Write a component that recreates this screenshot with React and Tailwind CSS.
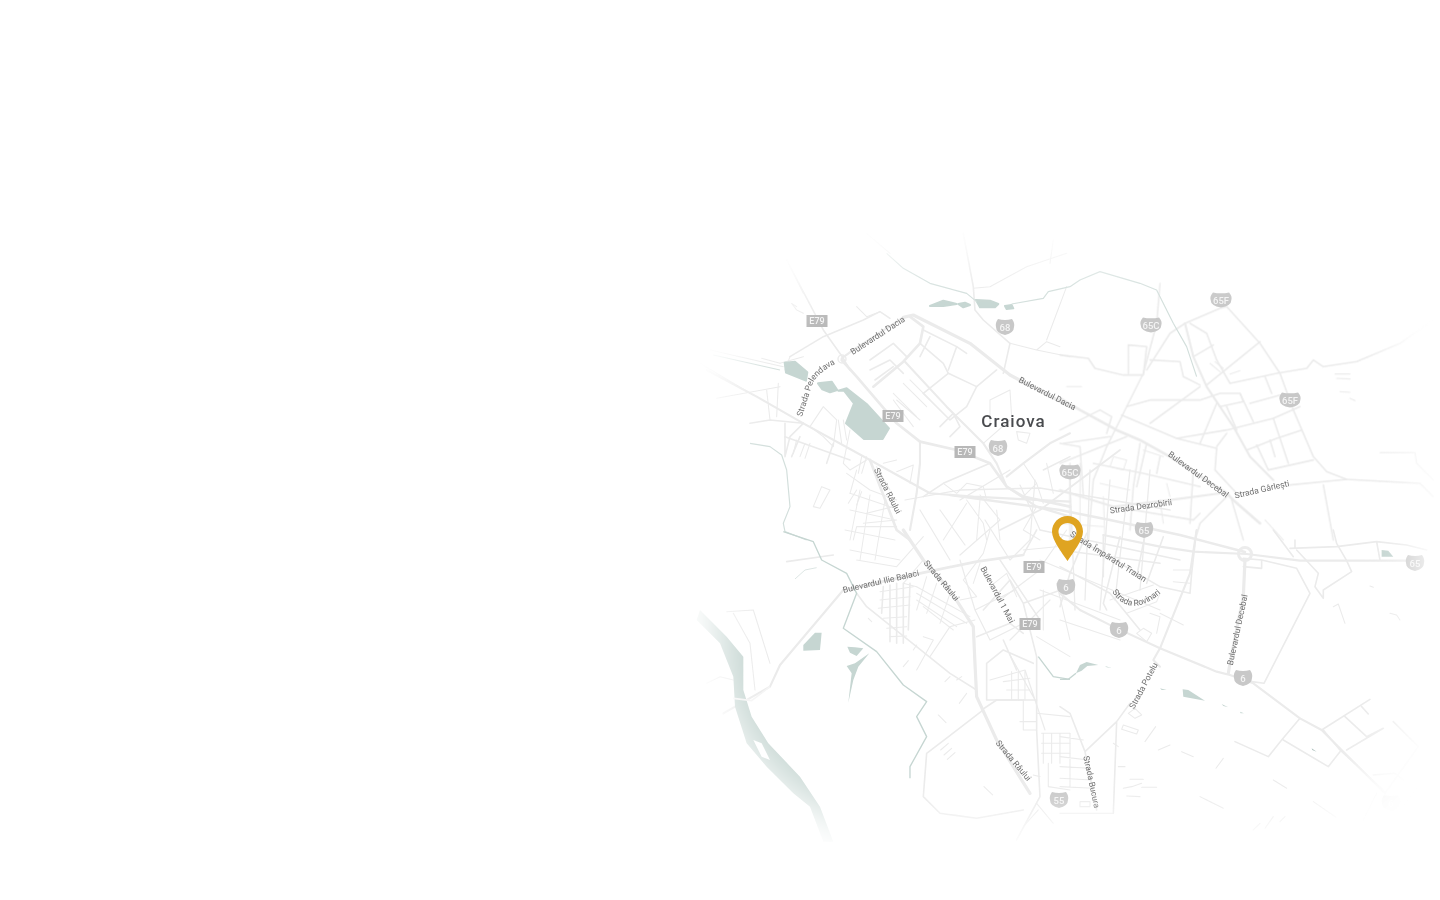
const roadsNW = [
  ["M640,262 L670,255 L840,340 L960,435 L1140,530", 6],
  ["M455,385 L490,360 L640,262", 4],
  ["M660,260 L700,290 L690,340 L640,395 L550,470", 5],
  ["M300,380 L400,320 L520,270 L570,245 L600,265", 3],
  ["M290,90 L400,300 L460,385 L480,420", 3],
  ["M455,390 L500,440 L620,580 L690,635 L800,660 L900,700 L950,770 L1000,800 L1140,830", 5],
  ["M50,420 L200,500 L340,580 L540,690 L720,790 L850,800 L1140,815", 4],
  ["M645,395 L770,530 L880,640 L920,700 L950,770 L1040,830 L1140,860", 4],
  ["M690,340 L760,400 L775,430 L700,490", 3],
  ["M775,430 L860,470 L920,420", 3],
  ["M700,300 L800,350 L775,420", 3],
  ["M720,320 L690,380 M800,350 L830,370", 3],
  ["M690,635 L690,700 L680,790 L660,900", 4],
  ["M540,690 L620,900 L660,930", 5],
  ["M340,580 L300,620 L285,680 M285,580 L285,680", 3],
  ["M180,580 L240,570 L340,580", 3],
  ["M285,620 L480,690 M330,620 L305,680 M430,640 L410,700", 3],
  ["M230,480 L240,570 M265,460 L260,560", 2],
  ["M300,380 L285,420", 2],
  ["M820,10 L850,170 L855,240 L880,270 L960,340 L940,430", 3],
  ["M850,175 L900,170 L1010,110 L1130,70", 2],
  ["M530,10 L600,70", 2],
  ["M960,340 L1040,360 L1140,380 M1040,360 L1070,335 L1110,350", 2],
  ["M1080,100 L1090,30 M1130,170 L1070,330", 2],
  ["M290,90 L340,190", 2],
  ["M500,230 L530,260 L570,245", 2],
  ["M540,390 L610,340 L650,380 M540,420 L600,390 L640,430 M555,450 L610,410", 3],
  ["M700,490 L780,570 L830,530 L860,470 M750,590 L790,550 L810,590 L780,620", 3],
  ["M880,640 L960,570 M900,510 L960,480 L965,560 M900,510 L900,590", 2],
  ["M980,605 L1020,610 L1010,640 L985,630 Z", 2],
  ["M1140,610 L1080,640 L1000,700 L950,740", 4],
  ["M1060,720 L1140,680", 3],
  ["M1070,700 L1090,790 M1040,760 L1060,820", 2],
  ["M1000,700 L1040,760 L1000,800", 2],
  ["M900,700 L760,760 L700,800", 3],
  ["M760,760 L800,790 L830,760 L880,770 L890,810", 2],
  ["M830,810 L880,880 L890,930 M870,810 L860,930 M760,930 L830,820", 2],
  ["M920,840 L930,930 M1040,830 L1000,900 L1050,930", 2],
  ["M620,725 L670,705 L660,760 M480,600 L460,700 L480,720 L530,690", 2],
  ["M370,830 L395,770 L420,780 L390,835 Z", 2],
  ["M480,790 L600,830 M475,820 L500,780 M500,825 L515,785", 2],
  ["M530,850 L610,830 M520,880 L620,870 M490,930 L500,890 L620,890", 2],
  ["M600,780 L560,710 M580,700 L620,690", 2],
  ["M470,730 L540,780 L620,810", 2],
  ["M500,720 L480,790 M515,680 L505,730 M530,680 L515,730", 2],
  ["M440,570 L430,650 L400,620 L360,590 L400,530 L440,570", 2],
  ["M320,630 L310,670 M345,640 L330,680 M360,640 L345,685", 2],
  ["M460,570 L470,630 M445,570 L455,640", 2],
  ["M320,230 L305,220 L320,240 L340,250", 2],
  ["M215,385 L270,400 L340,380", 2],
  ["M60,360 L280,410 M80,505 L270,470", 2],
  ["M30,400 L180,490", 2],
  ["M610,490 L680,560 M620,510 L690,570 M610,510 L670,590", 2],
  ["M640,460 L710,530 M660,450 L720,510", 2],
];

const roadsNE = [
  ["M0,505 L60,540 L170,600 L240,630 L330,680 L500,790 L520,810 L600,880", 5],
  ["M300,160 L290,280 L250,430 L190,550 L140,650 L100,750 L85,930", 3],
  ["M375,280 L330,310 L260,420", 3],
  ["M375,280 L410,265 L480,235 L500,230", 3],
  ["M500,230 L600,340 L660,430 L700,540 L760,680 L800,725 L860,748 L1080,760 L1120,800", 3],
  ["M375,280 L400,380 L440,470 L520,590 L570,680 L640,750", 4],
  ["M390,280 L440,310 L470,390 L510,460 L650,430 L740,415 L760,390 L790,410 L890,395 L1020,340 L1120,270", 3],
  ["M400,380 L460,345 M440,465 L600,335", 3],
  ["M0,375 L85,385 L105,415 L190,435 L250,435 M205,345 L260,350 L250,435 M205,345 L205,430", 3],
  ["M270,390 L360,395 L370,440 L420,465", 3],
  ["M200,530 L270,510 L420,510 L480,490 L540,490 L550,515 L480,530", 3],
  ["M270,580 L420,470", 3],
  ["M185,555 L350,625 L470,655", 3],
  ["M350,625 L500,600 L640,565 L720,530", 3],
  ["M500,530 L530,600 M570,520 L660,495 M615,440 L635,490 M540,490 L580,575 M640,565 L685,700", 3],
  ["M650,625 L725,600 M590,645 L625,720 M560,660 L650,625 M625,720 L760,690 M630,630 L645,680", 3],
  ["M470,655 L465,720 L530,790 M470,520 L420,640 M500,610 L470,650", 3],
  ["M790,765 L820,930 M500,800 L420,880 L405,930 M515,810 L550,930 M690,765 L860,748", 3],
  ["M615,870 L670,930", 2],
  ["M825,432 L870,432 M830,445 L870,447 M840,485 L870,487 M870,505 L885,512 M510,432 L540,422 M450,400 L480,425 M465,395 L490,415 M20,470 L65,470", 2],
  ["M960,668 L1065,668 L1070,700 L1120,750", 2],
  ["M0,600 L120,540 L155,560 L140,610", 3],
  ["M10,640 L150,620 M0,700 L200,620 M100,700 L250,730 L420,770", 3],
  ["M30,700 L30,930 M240,640 L220,770 L210,900 M260,640 L230,770 M300,680 L290,730", 3],
  ["M0,780 L160,830 L330,810 L480,790", 4],
  ["M160,830 L400,870 L420,850 M400,720 L390,880 M0,640 L60,650 L70,800", 3],
  ["M60,700 L60,900 M130,800 L135,930 M300,810 L310,880 M0,880 L130,890", 2],
  ["M160,680 L200,690 L190,720 L150,710 Z M250,660 L310,680 M120,760 L210,780 M320,760 L330,800", 2],
];

const roadsSW = [
  ["M640,0 L700,90 L780,180 L850,290 L855,400 L860,500 L920,630 L1020,790", 6],
  ["M290,95 L430,75", 3],
  ["M460,180 L690,130 L860,95 L1000,75", 5],
  ["M460,180 L270,405 L240,470 L100,550", 4],
  ["M110,245 L190,240 L240,400 M130,250 L180,340 L195,480", 2],
  ["M50,460 L90,440 L130,450", 2],
  ["M500,190 L530,230 L780,430 L860,480", 3],
  ["M580,170 L575,250 M600,165 L600,335 M620,160 L620,340 M640,160 L640,340 M660,160 L655,300", 3],
  ["M570,185 L670,170 M570,210 L660,200 M565,235 L660,225 M580,265 L650,260 M590,295 L650,290 M600,320 L650,318", 2],
  ["M680,170 L840,260 M680,190 L830,280 M680,210 L800,290 M710,140 L680,240 M700,230 L790,300 M740,160 L710,250 M780,190 L750,280", 2],
  ["M860,320 L960,280 L1000,310", 3],
  ["M890,400 L940,360 L1030,400 M890,400 L890,510 L1000,510 M940,330 L980,420", 3],
  ["M880,540 L710,670 L700,800 L750,850 L860,865 L1000,840", 3],
  ["M700,320 L730,330 L680,420 M720,380 L780,290 L855,270", 2],
  ["M875,540 L920,510 L1040,510", 3],
  ["M965,425 L965,510 M985,425 L985,510 M1005,425 L1005,510 M940,455 L1020,445 M950,480 L1020,480", 2],
  ["M1040,380 L1040,600 L1050,800 L980,930", 3],
  ["M1055,610 L1140,610 M1055,640 L1140,640 M1055,670 L1140,670 M1060,610 L1060,700 M1085,610 L1085,700 M1110,610 L1110,700", 2],
  ["M1000,510 L1000,600 L1040,600 M990,575 L1040,575", 2],
  ["M1075,700 L1075,770 L1140,780 M1040,550 L1140,560", 2],
  ["M640,410 L655,392 M808,520 L830,490 M745,555 L768,578 M752,660 L775,640 M762,675 L785,655 M772,688 L795,668", 2],
  ["M882,770 L908,795 M765,455 L780,440 M800,450 L815,440 M670,360 L680,345 M535,265 L545,275", 2],
  ["M900,0 L880,70 L820,150 L860,200 L810,210 M870,100 L850,160", 2],
  ["M880,240 L960,150 L1000,220 L1040,380 M1000,220 L1140,170 M1000,75 L1040,0", 3],
  ["M900,170 L950,130 L980,200 M1060,100 L1130,0", 2],
  ["M1100,50 L1000,60 M1060,180 L1060,300 M1100,160 L1140,330 M1040,320 L1140,380", 2],
  ["M1050,740 L1030,735 M1045,840 L1000,890 M1040,820 L1090,880", 2],
  ["M700,90 L640,160 L680,170 M500,90 L620,110 L700,20", 2],
];

const roadsSE = [
  ["M130,15 L300,50 L400,65 L560,72 L720,92 L1050,92", 4],
  ["M555,90 L550,200 L510,400 L505,430", 6],
  ["M605,90 L710,115 L750,190 L612,460 L575,455 M550,85 L605,90 L605,115 L550,110", 3],
  ["M0,190 L60,240 L160,290 L300,355 L470,425 L510,435 L580,460 L720,565 L785,600 L850,665 L975,790", 4],
  ["M790,600 L840,660 L970,780", 3],
  ["M785,600 L930,508 M855,560 L920,620 L970,595 M860,660 L970,595 M1000,575 L1075,650 L975,790 M940,735 L1005,730 L1030,750 M905,530 L925,552", 3],
  ["M720,565 L665,630 L625,680 L525,635 M670,630 L805,710 L840,665", 3],
  ["M820,0 L830,40 L860,92 L875,125 L790,180 L790,205 L765,170 L775,130 L710,60 M640,0 L700,80 M950,35 L960,90 M950,35 L1040,45 L1100,60 M690,55 L830,50 L950,35 M705,30 L705,55", 3],
  ["M820,230 L835,222 L855,280 M990,250 L1010,255 L1020,270 M930,168 L940,172", 2],
  ["M255,635 L287,590 M295,660 L330,645 M365,665 L400,680 M468,715 L490,685 M420,800 L490,835 M640,750 L680,775 M760,815 L828,862", 2],
  ["M190,775 L215,770 L245,760 M210,748 L250,748 M245,772 L290,772 M200,798 L240,800 M615,895 L640,860 M660,875 L675,860 M580,900 L600,880", 2],
  ["M300,170 L390,190 L395,130 L410,0", 3],
  ["M410,0 L390,130 L300,355 L280,390 L300,410", 4],
  ["M340,120 L390,120 M340,155 L390,160 M300,250 L370,285 M200,250 L290,215 L300,190 M150,210 L280,165", 2],
  ["M60,30 L300,170", 3],
  ["M0,110 L150,190 L240,300 M80,10 L30,130 L0,230 M180,20 L130,220 L140,240 M310,20 L260,160 M255,15 L230,140 M130,15 L130,140 M0,60 L300,100", 3],
  ["M230,310 L250,295 L275,310 L260,335 Z M270,250 L300,260 L290,310", 2],
  ["M210,520 L170,575 L75,665 L30,550 L0,530 M170,575 L160,850 M75,665 L110,840", 3],
  ["M0,620 L70,630 M0,680 L85,690 M0,710 L90,715 M0,745 L95,750 M0,770 L100,775 M30,610 L30,770", 2],
  ["M225,535 L245,555 L225,565 L205,550 Z M190,585 L235,600 L230,612 L185,598 Z", 2],
  ["M160,640 L175,650 M175,710 L195,710 M0,850 L160,850 M60,815 L90,815 L90,830 L60,830 Z", 2],
  ["M910,870 L950,790 M1030,830 L1075,770", 2],
];

// dense city centre and west side, in page pixels
const roadsCentre = [
  ["M950,495 L1060,510 L1110,520 L1180,535 L1245,552", 2.4],
  ["M960,490 L1040,488 L1170,510", 1.6],
  ["M1040,530 L1180,560", 1.4],
  ["M1000,530 L1040,510 L1080,480 L1120,450", 1.8],
  ["M960,500 L1010,470 M1000,560 L1040,620", 1.4],
  ["M980,495 L1000,520 L960,555 M1020,485 L1040,530 M1035,480 L1030,540", 1.2],
  ["M1070,480 L1075,610 M1090,470 L1085,600 M1110,480 L1100,610 M1130,470 L1115,600 M1150,470 L1140,590", 1.3],
  ["M1040,560 L1160,610 M1040,590 L1120,620 M1060,620 L1120,640", 1.2],
  ["M1000,600 L1040,570 M1010,640 L1050,600 M985,520 L1010,560 L1030,540", 1.2],
  ["M860,490 L850,540 M870,495 L860,560 M885,500 L875,560 M850,510 L895,520 M845,530 L895,540 M850,550 L900,560", 1],
  ["M920,510 L950,560 M940,510 L965,545 M905,500 L960,490", 1.2],
  ["M960,560 L975,610 L1015,590 M975,610 L990,640 L1030,620", 1.2],
  ["M1025,670 L1045,730 M990,680 L1025,670 M1010,655 L1035,700", 1.2],
];

const water = [
  "M720,228 L760,212 L800,222 L760,228 Z",
  "M805,222 L825,218 L840,225 L820,232 Z",
  "M858,210 L900,212 L925,222 L915,232 L870,232 Z",
  "M945,228 L965,225 L970,235 L950,237 Z",
  "M284,398 L315,395 L352,427 L348,452 L288,428 Z",
  "M384,460 L425,455 L442,480 L420,487 L397,478 Z",
  "M445,482 L470,475 L530,522 L597,595 L578,627 L522,627 L468,580 L492,520 L462,482 Z",
];

const rivers = [
  "M590,70 L640,115 L720,160 L830,190 L860,215",
  "M965,222 L1060,205 L1075,185 L1140,170",
  "M180,640 L240,650 L275,675 L290,720 L300,830 L280,880 L285,905 L350,930",
  "M1140,170 L1170,150 L1230,125 L1350,160 L1400,180 L1450,280",
  "M1450,280 L1490,350 L1520,440",
  "M70,375 L270,420",
];

const shields = [
  [1005, 327, "68"], [998, 448, "68"], [1151, 325, "65C"], [1070, 472, "65C"],
  [1221, 300, "65F"], [1290, 400, "65F"], [1144, 530, "65"], [1066, 587, "6"],
  [1119, 630, "6"], [1243, 678, "6"], [1391, 803, "6"], [1415, 563, "65"], [1059, 800, "55"],
];

const euRoutes = [[817, 321], [893, 416], [965, 452], [1034, 567], [1030, 624]];

const labels = [
  ["Bulevardul Dacia", 878, 336, -33],
  ["Bulevardul Dacia", 1047, 394, 27],
  ["Strada Râului", 887, 491, 63],
  ["Strada Dezrobirii", 1141, 507, -8],
  ["Bulevardul Decebal", 1198, 475, 36],
  ["Strada Gârlești", 1262, 490, -13],
  ["Strada Împăratul Traian", 1108, 557, 32],
  ["Bulevardul Ilie Balaci", 881, 582, -13],
  ["Strada Râului", 941, 581, 50],
  ["Bulevardul 1 Mai", 997, 595, 62],
  ["Strada Râului", 1013, 761, 50],
  ["Strada Bucura", 1091, 782, 78],
  ["Strada Potelu", 1144, 686, -62],
  ["Bulevardul Decebal", 1238, 630, -78],
];

function Roads({ items, x, y }) {
  return (
    <g transform={`translate(${x} ${y}) scale(0.3333)`} fill="none" stroke="#ebebeb" strokeLinejoin="round" strokeLinecap="round">
      {items.map(([d, w], i) => (
        <path key={i} d={d} strokeWidth={w * 1.6} />
      ))}
    </g>
  );
}

export default function App() {
  return (
    <div className="min-h-[900px] bg-white" style={{ fontFamily: "Roboto, sans-serif" }}>
      <svg viewBox="0 0 1440 900" className="block w-[1440px] h-[900px]">
        <defs>
          <filter id="soft" x="-15%" y="-15%" width="130%" height="130%">
            <feGaussianBlur stdDeviation="22" />
          </filter>
          <filter id="tiny">
            <feGaussianBlur stdDeviation="0.5" />
          </filter>
          <mask id="fade" maskUnits="userSpaceOnUse" x="0" y="0" width="1440" height="900">
            <rect x="722" y="262" width="695" height="560" rx="170" fill="white" filter="url(#soft)" />
          </mask>
          <path id="pelendava" d="M802,417 L812,385 Q816,374 835,364" />
          <path id="rovinari" d="M1112,592 Q1132,620 1163,591" />
        </defs>

        <g mask="url(#fade)">
          <g filter="url(#tiny)">
            <Roads items={roadsNW} x={690} y={230} />
            <Roads items={roadsNE} x={1060} y={230} />
            <Roads items={roadsSW} x={690} y={530} />
            <Roads items={roadsSE} x={1060} y={530} />
            <g fill="none" stroke="#ebebeb" strokeLinejoin="round" strokeLinecap="round">
              {roadsCentre.map(([d, w], i) => (
                <path key={i} d={d} strokeWidth={w} />
              ))}
            </g>

            {/* roundabouts */}
            <circle cx="1245" cy="554" r="6.5" fill="none" stroke="#ececec" strokeWidth="3" />
            <circle cx="842" cy="359" r="4" fill="none" stroke="#ececec" strokeWidth="1.5" />

            {/* lakes and rivers */}
            <g transform="translate(690 230) scale(0.3333)" fill="#c6d6d2" stroke="#c6d6d2" strokeWidth="6" strokeLinejoin="round">
              {water.map((d) => (
                <path key={d} d={d} />
              ))}
              {rivers.map((d) => (
                <path key={d} d={d} fill="none" stroke="#d3dfdc" strokeWidth="3.5" />
              ))}
            </g>
            <g transform="translate(690 530) scale(0.3333)" strokeLinejoin="round">
              <path d="M280,5 L370,35 L395,90 L470,130 L500,190 L460,295 L560,365 L640,465 L710,515 L680,560 L710,620 L660,710 L660,745" fill="none" stroke="#c6d6d2" strokeWidth="4" />
              <path
                fillRule="evenodd"
                fill="#c6d6d2"
                d="M30,240 L110,320 L160,380 L160,480 L185,560 L235,640 L330,740 L390,830 L430,935 L400,935 L360,830 L310,790 L230,710 L170,640 L135,530 L130,440 L90,340 L20,270 Z M190,630 L215,640 L240,690 L215,680 Z"
              />
              <path fill="#c6d6d2" d="M340,345 L375,308 L395,308 L390,360 L340,362 Z" />
              <path fill="#c6d6d2" d="M472,350 L495,352 L520,355 L500,378 L480,368 Z" />
              <path fill="#c6d6d2" d="M538,370 L505,410 L490,450 L475,518 L485,430 L470,408 L495,400 Z" />
              <path d="M315,147 L345,120 L380,113" fill="none" stroke="#dde6e4" strokeWidth="3" />
              <path d="M130,505 L185,512 L240,470" fill="none" stroke="#f4f4f4" strokeWidth="5" />
              <path d="M1045,380 L1090,440 L1140,448" fill="none" stroke="#c6d6d2" strokeWidth="4" />
            </g>
            <g transform="translate(1060 530) scale(0.3333)" fill="#c6d6d2">
              <path d="M0,448 L25,448 L48,430" fill="none" stroke="#c6d6d2" strokeWidth="4" />
              <path d="M48,430 L60,405 L80,396 L115,405 L82,408 L65,422 Z" />
              <path d="M368,478 L385,480 L435,512 L370,500 Z" />
              <path d="M485,522 L505,532 L490,528 Z M300,475 L320,480 L305,480 Z M540,545 L552,550 L542,550 Z M135,408 L155,414 L140,412 Z" />
              <path d="M965,60 L985,62 L1000,80 L965,80 Z" />
              <path d="M755,655 L770,665 L757,660 Z" fill="#a9bdb9" />
            </g>

            {/* road shields */}
            {shields.map(([x, y, name], i) => (
              <g key={i} transform={`translate(${x} ${y})`}>
                <path
                  d="M-7,-8 Q0,-6 7,-8 Q10,-4 9,0 Q9,6 0,8 Q-9,6 -9,0 Q-10,-4 -7,-8 Z"
                  fill="#c8c8c8"
                  transform={name.length > 2 ? "scale(1.15 0.95)" : undefined}
                />
                <text textAnchor="middle" y="3.5" fontSize="9.5" fontWeight="500" fill="#f4f4f4">{name}</text>
              </g>
            ))}
            {euRoutes.map(([x, y], i) => (
              <g key={i} transform={`translate(${x} ${y})`}>
                <rect x="-10.5" y="-6" width="21" height="12" fill="#b8b8b8" />
                <text textAnchor="middle" y="3.2" fontSize="9" fontWeight="500" fill="#f4f4f4">E79</text>
              </g>
            ))}

            {/* street names */}
            <g fontSize="8.5" fill="#6f6f6f">
              {labels.map(([name, x, y, angle], i) => (
                <text key={i} textAnchor="middle" dominantBaseline="middle" transform={`translate(${x} ${y}) rotate(${angle})`}>
                  {name}
                </text>
              ))}
              <text>
                <textPath href="#pelendava">Strada Pelendava</textPath>
              </text>
              <text>
                <textPath href="#rovinari">Strada Rovinari</textPath>
              </text>
            </g>

            <text x="1013.5" y="426.5" textAnchor="middle" fontSize="17" fontWeight="500" letterSpacing="1" fill="#4a4c4f">Craiova</text>
          </g>
        </g>

        {/* location pin */}
        <path
          fillRule="evenodd"
          fill="#dfa421"
          d="M1067.5,516 C1076.3,516 1083,523 1083,531.8 C1083,540 1073,553 1067.5,561 C1062,553 1052,540 1052,531.8 C1052,523 1058.7,516 1067.5,516 Z M1067.5,523 C1062.5,523 1058.5,527 1058.5,531.8 C1058.5,536.7 1062.5,540.7 1067.5,540.7 C1072.5,540.7 1076.5,536.7 1076.5,531.8 C1076.5,527 1072.5,523 1067.5,523 Z"
        />
      </svg>
    </div>
  );
}
